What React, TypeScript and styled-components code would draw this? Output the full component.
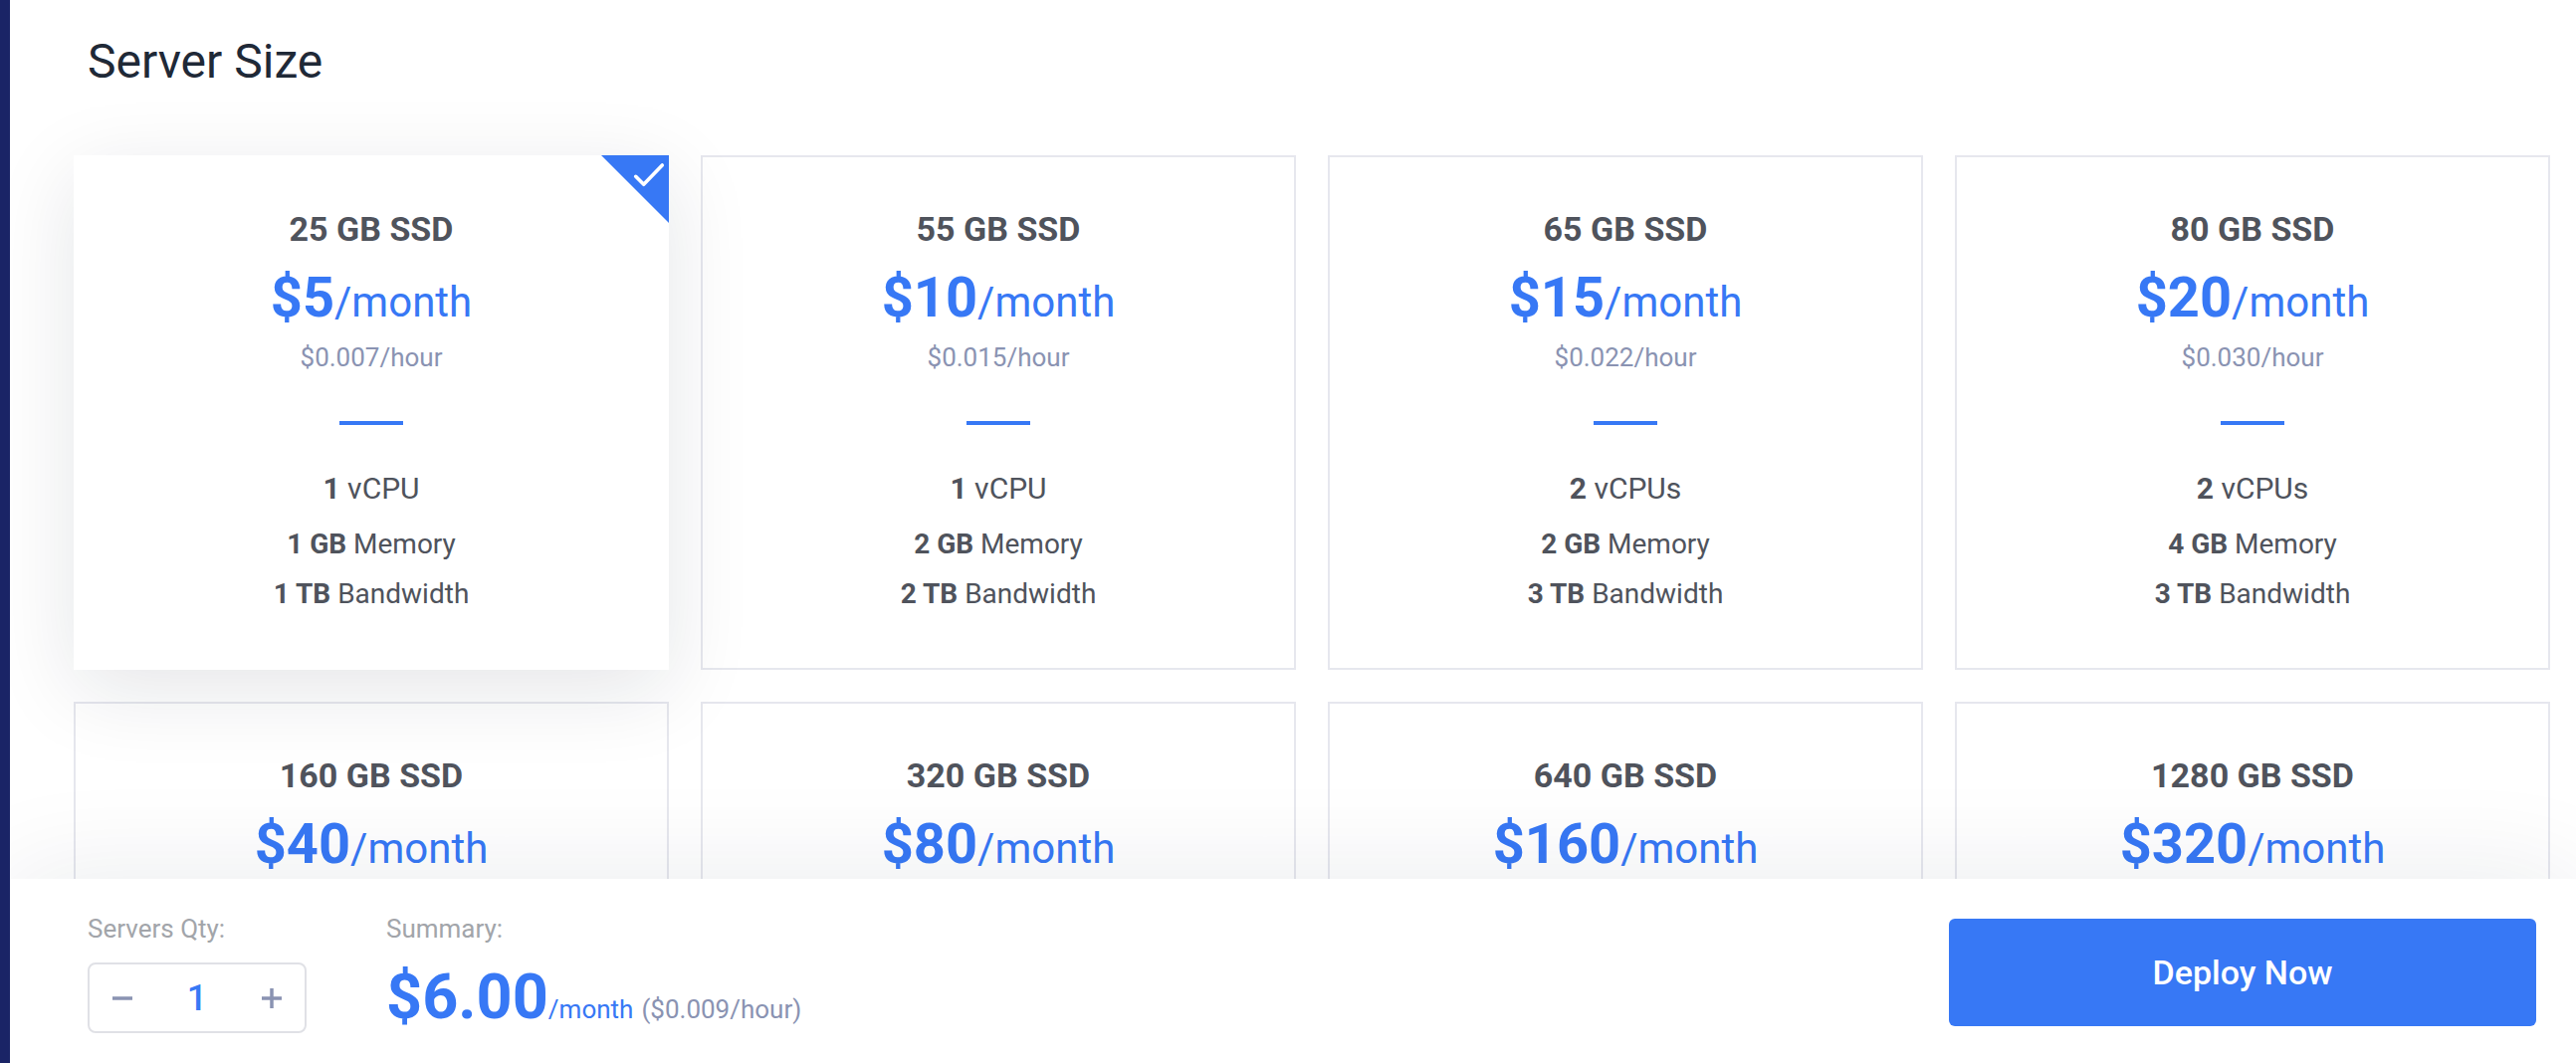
import React from "react";
import styled, { createGlobalStyle } from "styled-components";

const Global = createGlobalStyle`
  html, body { margin: 0; padding: 0; height: 100%; background: #fff; }
  body { font-family: Roboto, "Liberation Sans", sans-serif; overflow: hidden; }
  #root { height: 100%; }
`;

const Shell = styled.div`
  display: flex;
  height: 1068px;
  background: #fff;
`;
const Sidebar = styled.aside`
  width: 10px;
  flex: none;
  background: #1a2466;
  position: relative;
  z-index: 3;
`;
const Main = styled.main`
  flex: 1;
  min-width: 0;
  display: flex;
  flex-direction: column;
`;
const Content = styled.section`
  height: 883px;
  flex: none;
  overflow: hidden;
  padding: 0 27px 0 64px;
  box-sizing: border-box;
`;
const Heading = styled.h1`
  margin: 0;
  padding: 31px 0 0 14px;
  height: 156px;
  box-sizing: border-box;
  font-size: 48px;
  line-height: 62px;
  font-weight: 400;
  color: #1f2937;
`;
const Grid = styled.div`
  display: grid;
  grid-template-columns: repeat(4, 598px);
  grid-auto-rows: 517px;
  gap: 32px;
`;
const Card = styled.article<{ $selected?: boolean }>`
  position: relative;
  box-sizing: border-box;
  border: 2px solid ${(p) => (p.$selected ? "#fff" : "#e6e7ee")};
  box-shadow: ${(p) => (p.$selected ? "0 20px 80px rgba(20, 30, 50, 0.11)" : "none")};
  background: ${(p) => (p.$selected ? "#fff" : "transparent")};
  z-index: ${(p) => (p.$selected ? 1 : 0)};
  padding-top: 50px;
  text-align: center;
  color: #4f535c;
`;
const Corner = styled.svg`
  position: absolute;
  top: -2px;
  right: -2px;
  width: 68px;
  height: 68px;
`;
const Size = styled.div`
  font-size: 34px;
  line-height: 44px;
  font-weight: 700;
  color: #4f535c;
`;
const Price = styled.div`
  margin-top: 14px;
  font-size: 42px;
  line-height: 66px;
  color: #3778f5;
`;
const Amount = styled.strong`
  font-size: 56px;
  font-weight: 700;
`;
const Hourly = styled.div`
  margin-top: 4px;
  font-size: 26px;
  line-height: 36px;
  color: #8a93b2;
`;
const Rule = styled.div`
  width: 64px;
  height: 4px;
  margin: 46px auto 44px;
  background: #3778f5;
`;
const Feature = styled.div<{ $gap: number; $large?: boolean }>`
  margin-top: ${(p) => p.$gap}px;
  font-size: ${(p) => (p.$large ? 30 : 28)}px;
  line-height: 40px;
  b { font-weight: 700; }
`;
const Footer = styled.footer`
  flex: 1;
  position: relative;
  z-index: 2;
  background: #fff;
  box-shadow: 0 0 110px rgba(20, 30, 50, 0.09);
  display: flex;
  align-items: flex-start;
  padding: 0 40px 0 78px;
`;
const Block = styled.div<{ $width?: number }>`
  width: ${(p) => (p.$width ? `${p.$width}px` : "auto")};
  padding-top: 33px;
  flex: none;
`;
const Label = styled.div`
  font-size: 26px;
  line-height: 34px;
  color: #a2a5aa;
`;
const Stepper = styled.div`
  margin-top: 17px;
  width: 220px;
  height: 71px;
  box-sizing: border-box;
  border: 2px solid #e0e1e6;
  border-radius: 8px;
  display: flex;
  align-items: center;
  justify-content: space-between;
  padding: 0 23px 0 23px;
`;
const StepIcon = styled.svg`
  width: 20px;
  height: 20px;
  stroke: #8a93b2;
  stroke-width: 3.5;
  fill: none;
`;
const Qty = styled.span`
  font-size: 36px;
  font-weight: 500;
  color: #3778f5;
`;
const Total = styled.div`
  margin-top: 10px;
  display: flex;
  align-items: baseline;
  color: #3778f5;
`;
const TotalAmount = styled.strong`
  font-size: 63px;
  line-height: 84px;
  font-weight: 700;
`;
const Per = styled.span`
  font-size: 26px;
`;
const TotalHourly = styled.span`
  font-size: 26px;
  color: #8a93b2;
  margin-left: 8px;
`;
const Deploy = styled.button`
  margin-left: auto;
  margin-top: 40px;
  width: 590px;
  height: 108px;
  border: 0;
  border-radius: 6px;
  background: #3778f5;
  color: #fff;
  font-family: inherit;
  font-size: 34px;
  font-weight: 500;
`;

type Plan = { size: string; amount: string; hour?: string; cpu?: string; cpuLabel?: string; mem?: string; band?: string };
const plans: Plan[] = [
  { size: "25 GB SSD", amount: "$5", hour: "$0.007/hour", cpu: "1", cpuLabel: "vCPU", mem: "1 GB", band: "1 TB" },
  { size: "55 GB SSD", amount: "$10", hour: "$0.015/hour", cpu: "1", cpuLabel: "vCPU", mem: "2 GB", band: "2 TB" },
  { size: "65 GB SSD", amount: "$15", hour: "$0.022/hour", cpu: "2", cpuLabel: "vCPUs", mem: "2 GB", band: "3 TB" },
  { size: "80 GB SSD", amount: "$20", hour: "$0.030/hour", cpu: "2", cpuLabel: "vCPUs", mem: "4 GB", band: "3 TB" },
  { size: "160 GB SSD", amount: "$40" },
  { size: "320 GB SSD", amount: "$80" },
  { size: "640 GB SSD", amount: "$160" },
  { size: "1280 GB SSD", amount: "$320" },
];

export default function App() {
  return (
    <Shell>
      <Global />
      <Sidebar />
      <Main>
        <Content>
          <Heading>Server Size</Heading>
          <Grid>
            {plans.map((p, i) => (
              <Card key={p.size} $selected={i === 0}>
                {i === 0 && (
                  <Corner viewBox="0 0 68 68">
                    <polygon points="0,0 68,0 68,68" fill="#3778f5" />
                    <polyline points="34.7,21.3 42.7,29.3 61.3,10" fill="none" stroke="#fff" strokeWidth="3.6" strokeLinecap="round" strokeLinejoin="round" />
                  </Corner>
                )}
                <Size>{p.size}</Size>
                <Price>
                  <Amount>{p.amount}</Amount>/month
                </Price>
                {p.hour && (
                  <>
                    <Hourly>{p.hour}</Hourly>
                    <Rule />
                    <Feature $gap={0} $large>
                      <b>{p.cpu}</b> {p.cpuLabel}
                    </Feature>
                    <Feature $gap={16}>
                      <b>{p.mem}</b> Memory
                    </Feature>
                    <Feature $gap={10}>
                      <b>{p.band}</b> Bandwidth
                    </Feature>
                  </>
                )}
              </Card>
            ))}
          </Grid>
        </Content>
        <Footer>
          <Block $width={300}>
            <Label>Servers Qty:</Label>
            <Stepper>
              <StepIcon viewBox="0 0 20 20"><line x1="0" y1="10" x2="20" y2="10" /></StepIcon>
              <Qty>1</Qty>
              <StepIcon viewBox="0 0 20 20"><path d="M0 10H20M10 0V20" /></StepIcon>
            </Stepper>
          </Block>
          <Block>
            <Label>Summary:</Label>
            <Total>
              <TotalAmount>$6.00</TotalAmount>
              <Per>/month</Per>
              <TotalHourly>($0.009/hour)</TotalHourly>
            </Total>
          </Block>
          <Deploy>Deploy Now</Deploy>
        </Footer>
      </Main>
    </Shell>
  );
}
